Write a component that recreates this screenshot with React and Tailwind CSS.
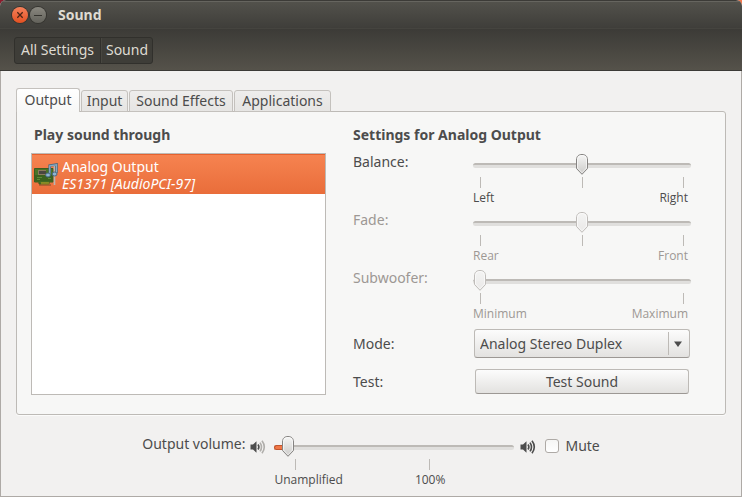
import { useState } from "react";

function Thumb({ disabled, id }) {
  return (
    <svg width="14" height="23" viewBox="0 0 14 23" className="block">
      <defs>
        <linearGradient id={id} x1="0" y1="0" x2="0" y2="1">
          <stop offset="0" stopColor={disabled ? "#f4f4f3" : "#f6f6f5"} />
          <stop offset="1" stopColor={disabled ? "#e9e8e7" : "#cbcac8"} />
        </linearGradient>
      </defs>
      <path
        d="M1.5 7C1.5 3 3.8 1.5 7 1.5S12.5 3 12.5 7V15.5L7 21.3L1.5 15.5Z"
        fill={"url(#" + id + ")"}
        stroke={disabled ? "#bfbcb9" : "#858381"}
      />
      <path
        d="M2.5 7C2.5 4 4.3 2.5 7 2.5S11.5 4 11.5 7V15L7 19.8L2.5 15Z"
        fill="none"
        stroke="#ffffff"
        strokeOpacity="0.6"
      />
    </svg>
  );
}

function Scale({ id, label, initial, disabled, filled, ticks, children }) {
  const [value, setValue] = useState(initial);
  const ratio = value / 1000;
  return (
    <div className={disabled ? "pt-px text-[#9d9894]" : "pt-px text-[#4c4c4c]"}>
      <div className="relative flex h-6 items-center">
        <div className="h-[5px] w-full overflow-hidden rounded-full border-t-2 border-[#bdbab6] bg-[#e0dfdd]">
        </div>
        {filled && (
          <div
            className="absolute left-0 h-[5px] rounded-l-full border border-r-0 border-[#c2552e] bg-[#f07746]"
            style={{ width: `calc(7px + (100% - 14px) * ${ratio})` }}
          />
        )}
        <div className="absolute top-0" style={{ left: `calc((100% - 14px) * ${ratio})` }}>
          <Thumb id={id + "-fill"} disabled={disabled} />
        </div>
        <input
          id={id}
          type="range"
          min="0"
          max="1000"
          aria-label={label}
          value={value}
          disabled={disabled}
          onChange={(e) => setValue(Number(e.target.value))}
          className="absolute inset-0 h-full w-full opacity-0"
        />
      </div>
      <div className="flex h-[11px] justify-between px-[7px]">{ticks}</div>
      {children}
    </div>
  );
}

function Tick({ className = "" }) {
  return <span className={"w-px shrink-0 bg-[#bdbab6] " + className} />;
}

function SettingScale({ id, name, from, to, initial, disabled, center }) {
  return (
    <div className="grid h-[58px] grid-cols-[120px_1fr]">
      <label htmlFor={id} className={disabled ? "h-5 text-[#9d9894]" : "h-5"}>
        {name}
      </label>
      <Scale
        id={id}
        label={name}
        initial={initial}
        disabled={disabled}
        ticks={
          <>
            <Tick />
            {center && <Tick />}
            <Tick />
          </>
        }
      >
        <div className="flex justify-between pr-[3px] font-['Open_Sans',sans-serif] text-xs leading-[19px]">
          <span>{from}</span>
          <span>{to}</span>
        </div>
      </Scale>
    </div>
  );
}

function Speaker({ loud }) {
  const wave = loud ? "#4c4c4c" : "#b0aeab";
  return (
    <svg width="16" height="16" viewBox="0 0 16 16" fill="none" className="shrink-0">
      <path d="M0.5 5.5H3L6.5 2.3V13.7L3 10.5H0.5Z" fill="#4c4c4c" />
      <path d="M8 5.5Q9.8 8 8 10.5" stroke="#4c4c4c" strokeWidth="1.6" />
      <path d="M10 3.6Q13 8 10 12.4" stroke={wave} strokeWidth="1.6" />
      <path d="M12 1.8Q16.6 8 12 14.2" stroke={wave} strokeWidth="1.6" />
    </svg>
  );
}

function SoundCard() {
  return (
    <svg width="24" height="24" viewBox="0 0 24 24" fill="none" className="shrink-0">
      <path d="M0.5 5.5H19V19H15V21H5V19H0.5Z" fill="#4a7426" stroke="#3b5c20" />
      <path d="M1 12H19V18.5H1Z" fill="#3b611f" />
      <rect x="4" y="7" width="8" height="5" fill="#8b7a5c" />
      <rect x="5" y="8" width="7" height="3" fill="#4a4640" />
      <path d="M3 14.5H8M3 16.5H6M14 15.5H17" stroke="#5b8a34" />
      <path d="M8 19V22M10 19V22M12 19V22M14 19V22" stroke="#c9a526" />
      <path d="M5 22H17" stroke="#7a4a28" />
      <path d="M20.5 3V22" stroke="#b9b6b2" strokeWidth="1.6" />
      <path d="M15.7 11V2.5L22.5 1.5V10" stroke="#47687f" strokeWidth="2.6" />
      <path d="M15.7 11V2.8L22.5 1.8V10" stroke="#86a9c2" strokeWidth="1.2" />
      <ellipse cx="14" cy="12" rx="2.4" ry="2" fill="#8fb5d0" stroke="#47687f" />
      <ellipse cx="20.6" cy="11" rx="2.4" ry="2" fill="#8fb5d0" stroke="#47687f" />
    </svg>
  );
}

const TABS = [
  { name: "Output", width: "w-16" },
  { name: "Input", width: "w-[47px]" },
  { name: "Sound Effects", width: "w-[104px]" },
  { name: "Applications", width: "w-[97px]" },
];

export default function App() {
  const [tab, setTab] = useState("Output");
  const [mute, setMute] = useState(false);
  return (
    <div className="min-h-screen bg-linear-to-r from-[#8c1c2c] to-[#f4794f] font-['Noto_Sans','Open_Sans',sans-serif] text-[14px] leading-5 text-[#4c4c4c]">
      <div className="flex min-h-screen flex-col overflow-hidden rounded-t-[6px] bg-[#f2f1f0]">
        <header className="flex h-7 items-center border-t border-[#3c3b37] bg-linear-to-b from-[#53524c] to-[#3f3e3a] pl-3 shadow-[inset_0_1px_0_#66655f]">
          <button
            aria-label="Close"
            className="flex size-4 items-center justify-center rounded-full bg-linear-to-b from-[#f58059] to-[#e3501f] shadow-[0_0_0_1px_#35342f]"
          >
            <svg width="8" height="8" viewBox="0 0 8 8">
              <path d="M1.3 1.3L6.7 6.7M6.7 1.3L1.3 6.7" stroke="#4b2415" strokeWidth="1.3" />
            </svg>
          </button>
          <button
            aria-label="Minimize"
            className="ml-[2px] flex size-4 items-center justify-center rounded-full bg-linear-to-b from-[#8a8880] to-[#63625b] shadow-[0_0_0_1px_#35342f]"
          >
            <svg width="8" height="8" viewBox="0 0 8 8">
              <path d="M0 4.5H8" stroke="#34332e" />
            </svg>
          </button>
          <h1 className="ml-3 font-bold text-[#dfdbd2]">Sound</h1>
        </header>
        <nav className="flex h-[43px] items-start border-t border-b border-t-[#45443f] border-b-[#3c3b37] bg-linear-to-b from-[#3c3b37] to-[#55524a] pt-2 pl-[14px] text-[#dfdbd2]">
          <div className="flex h-[27px] rounded-[3px] border border-[#31302c] bg-[#3e3d38]">
            <button className="w-[86px] border-r border-[#31302c] pb-px">All Settings</button>
            <button className="w-[51px] border-l border-[#484741] pb-px">Sound</button>
          </div>
        </nav>
        <main className="flex grow flex-col border-x border-b border-[#aeaaa6] px-[15px] pt-[17px]">
          <div role="tablist" className="relative z-10 -mb-px flex items-end gap-px">
            {TABS.map((t) => (
              <button
                key={t.name}
                role="tab"
                aria-selected={tab === t.name}
                onClick={() => setTab(t.name)}
                className={
                  (tab === t.name
                    ? "h-6 border-b-0 bg-linear-to-b from-white to-[#f7f7f6] pb-px "
                    : "h-[22px] bg-linear-to-b from-[#eeedec] to-[#e6e5e3] ") +
                  "rounded-t-[3px] border border-[#c4c1bd] whitespace-nowrap " +
                  t.width
                }
              >
                {t.name}
              </button>
            ))}
          </div>
          <section className="grid h-[304px] grid-cols-[295fr_338fr] gap-x-[27px] rounded-[3px] rounded-tl-none border border-[#bdbab6] bg-[#f7f7f6] pt-[13px] pr-[34px] pb-[19px] pl-[14px] shadow-[0_1px_0_#fbfbfa]">
            <div className="flex min-w-0 flex-col">
              <h2 className="mb-2 pl-[3px] font-bold">Play sound through</h2>
              <div role="listbox" aria-label="Play sound through" className="grow border border-[#bdbab6] bg-white">
                <div
                  role="option"
                  aria-selected="true"
                  className="flex h-10 items-center gap-1 border-t border-[#e5622f] bg-linear-to-b from-[#f68350] to-[#e96d3a] pl-[2px] text-white"
                >
                  <SoundCard />
                  <div className="leading-[17px]">
                    <div>Analog Output</div>
                    <div className="italic">ES1371 [AudioPCI-97]</div>
                  </div>
                </div>
              </div>
            </div>
            <div className="min-w-0">
              <h2 className="mb-[7px] font-bold">Settings for Analog Output</h2>
              <SettingScale id="balance" name="Balance:" from="Left" to="Right" initial={500} center />
              <SettingScale id="fade" name="Fade:" from="Rear" to="Front" initial={500} center disabled />
              <SettingScale id="subwoofer" name="Subwoofer:" from="Minimum" to="Maximum" initial={0} disabled />
              <div className="mt-[3px] grid grid-cols-[120px_1fr] items-center">
                <label htmlFor="mode">Mode:</label>
                <div className="relative mx-px">
                  <select
                    id="mode"
                    className="block h-[29px] w-full appearance-none rounded-[3px] border border-[#bdbab6] border-b-[#9c9894] bg-linear-to-b from-[#fcfcfc] to-[#e3e2e0] pl-[5px]"
                  >
                    <option>Analog Stereo Duplex</option>
                  </select>
                  <div className="pointer-events-none absolute inset-y-[3px] right-0 flex w-[22px] items-center justify-center border-l border-[#bdbab6] pr-1">
                    <svg width="8" height="6" viewBox="0 0 8 6">
                      <path d="M0 0.5H8L4 6Z" fill="#4c4c4c" />
                    </svg>
                  </div>
                </div>
              </div>
              <div className="mt-[11px] grid grid-cols-[120px_1fr] items-center">
                <span>Test:</span>
                <button className="mx-[2px] h-[25px] rounded-[3px] border border-[#bdbab6] border-b-[#9c9894] bg-linear-to-b from-[#fcfcfc] to-[#e3e2e0]">
                  Test Sound
                </button>
              </div>
            </div>
          </section>
          <div className="flex items-start justify-center pt-[19px]">
            <label htmlFor="volume" className="mr-[5px]">
              Output volume:
            </label>
            <div className="mr-2 pt-[5px]">
              <Speaker />
            </div>
            <div className="w-60">
              <Scale
                id="volume"
                label="Output volume"
                initial={27}
                filled
                ticks={
                  <div className="flex w-full">
                    <Tick className="ml-[6%]" />
                    <Tick className="ml-[59%]" />
                  </div>
                }
              >
                <div className="flex font-['Open_Sans',sans-serif] text-xs leading-[19px]">
                  <span>Unamplified</span>
                  <span className="ml-[30%]">100%</span>
                </div>
              </Scale>
            </div>
            <div className="ml-[6px] pt-[5px]">
              <Speaker loud />
            </div>
            <label className="ml-[9px] flex items-center gap-[6px] pt-[2px]">
              <input
                type="checkbox"
                checked={mute}
                onChange={(e) => setMute(e.target.checked)}
                className="size-[14px] appearance-none rounded-[3px] border border-[#aeaaa6] bg-linear-to-b from-[#f6f6f5] to-white checked:bg-[#4c4c4c]"
              />
              Mute
            </label>
          </div>
        </main>
      </div>
    </div>
  );
}
